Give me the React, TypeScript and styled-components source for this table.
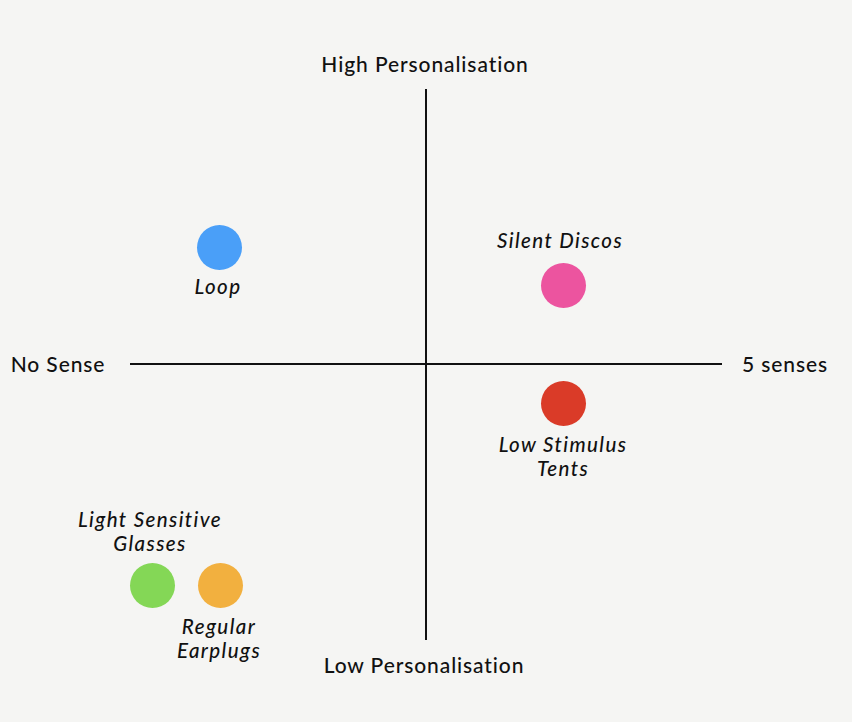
import React from 'react'
import styled, { createGlobalStyle } from 'styled-components'

interface Point {
    $x: number,
    $y: number,
}

interface Item {
    label: string[],
    color: string,
    dot: [number, number],
    text: [number, number],
}

const items: Item[] = [
    { label: ['Loop'], color: '#4a9ff8', dot: [219, 247], text: [218, 286] },
    { label: ['Silent Discos'], color: '#ec549f', dot: [563, 285], text: [560, 240] },
    { label: ['Low Stimulus', 'Tents'], color: '#da3b28', dot: [563, 403], text: [563, 456] },
    { label: ['Light Sensitive', 'Glasses'], color: '#84d756', dot: [152, 585], text: [150, 531] },
    { label: ['Regular', 'Earplugs'], color: '#f2b03f', dot: [220, 585], text: [219, 638] },
]

const App: React.FC = () => {
    return (
        <>
            <GlobalStyle />
            <StyledCanvas>
                <StyledVLine />
                <StyledHLine />
                <StyledAxisLabel $x={425} $y={64}>High Personalisation</StyledAxisLabel>
                <StyledAxisLabel $x={424} $y={665}>Low Personalisation</StyledAxisLabel>
                <StyledAxisLabel $x={58} $y={364}>No Sense</StyledAxisLabel>
                <StyledAxisLabel $x={785} $y={364}>5 senses</StyledAxisLabel>
                {items.map((item) => (
                    <React.Fragment key={item.label.join(' ')}>
                        <StyledDot $x={item.dot[0]} $y={item.dot[1]} $color={item.color} />
                        <StyledCaption $x={item.text[0]} $y={item.text[1]}>
                            {item.label.map((line) => <span key={line}>{line}</span>)}
                        </StyledCaption>
                    </React.Fragment>
                ))}
            </StyledCanvas>
        </>
    )
}

const GlobalStyle = createGlobalStyle`
    html, body {
        margin: 0;
        padding: 0;
        background: #f5f5f3;
    }
    body {
        font-family: Lato, "Noto Sans", sans-serif;
        color: #111111;
    }
`

const StyledCanvas = styled.div`
    position: relative;
    width: 852px;
    height: 722px;
    background: #f5f5f3;
    overflow: hidden;
`

const StyledVLine = styled.div`
    position: absolute;
    left: 425px;
    top: 89px;
    width: 2px;
    height: 551px;
    background: #111111;
`

const StyledHLine = styled.div`
    position: absolute;
    left: 130px;
    top: 363px;
    width: 592px;
    height: 2px;
    background: #111111;
`

const StyledAxisLabel = styled.div<Point>`
    position: absolute;
    left: ${(props) => props.$x}px;
    top: ${(props) => props.$y}px;
    transform: translate(-50%, -50%);
    white-space: nowrap;
    font-size: 21px;
    font-weight: 500;
    letter-spacing: 0.9px;
    line-height: 24px;
`

const StyledDot = styled.div<Point & { $color: string }>`
    position: absolute;
    left: ${(props) => props.$x - 22}px;
    top: ${(props) => props.$y - 22}px;
    width: 45px;
    height: 45px;
    border-radius: 50%;
    background: ${(props) => props.$color};
`

const StyledCaption = styled.div<Point>`
    position: absolute;
    left: ${(props) => props.$x}px;
    top: ${(props) => props.$y}px;
    transform: translate(-50%, -50%);
    display: flex;
    flex-direction: column;
    align-items: center;
    white-space: nowrap;
    font-size: 20.5px;
    font-style: italic;
    font-weight: 500;
    letter-spacing: 1.4px;
    line-height: 24px;
`

export default App
